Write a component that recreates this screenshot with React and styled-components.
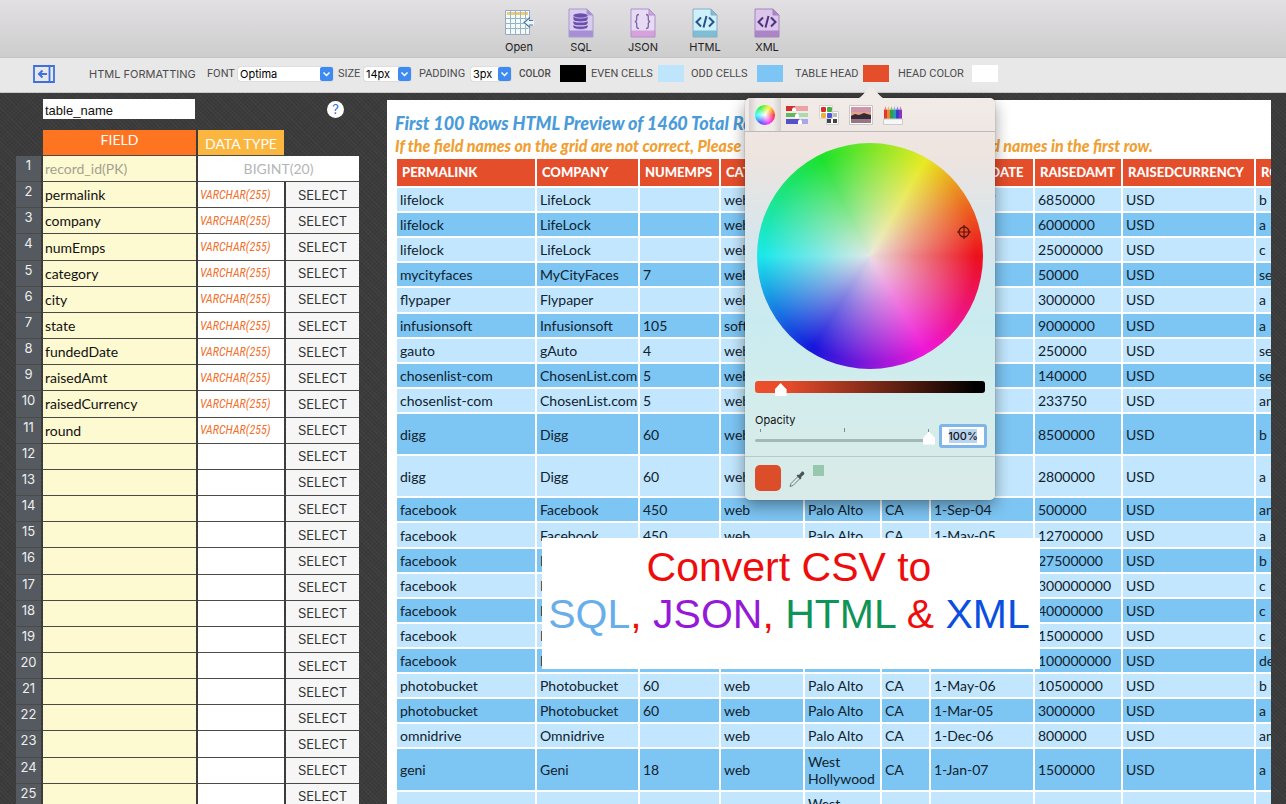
import React, { useState } from "react";
import styled, { createGlobalStyle } from "styled-components";

const GlobalStyle = createGlobalStyle`
  * {
    box-sizing: border-box;
  }

  body {
    margin: 0;
    overflow: hidden;
    font-family: Inter, "Liberation Sans", sans-serif;
    color: #111;
  }

  button, input, select {
    font: inherit;
    color: inherit;
    margin: 0;
    padding: 0;
    border: none;
    border-radius: 0;
    background: none;
  }
`;

const Page = styled.div`
  display: flex;
  flex-direction: column;
  height: 100vh;
  background-color: #3b3b3b;
  background-image:
    repeating-linear-gradient(45deg, rgba(255, 255, 255, 0.03) 0 1px, transparent 1px 3px),
    repeating-linear-gradient(-45deg, rgba(0, 0, 0, 0.05) 0 1px, transparent 1px 3px);
`;

/* ---------- top toolbar ---------- */

const Toolbar = styled.header`
  display: flex;
  justify-content: center;
  flex-shrink: 0;
  height: 58px;
  padding-top: 8px;
  background: linear-gradient(#e2e0e2, #cecdce);
  border-bottom: 1px solid #c4c4c4;
`;

const ToolButton = styled.button`
  display: flex;
  flex-direction: column;
  align-items: center;
  gap: 2px;
  width: 62px;
  font-size: 11px;
  line-height: 14px;
  color: #222;
`;

/* ---------- formatting bar ---------- */

const FormatBar = styled.div`
  display: grid;
  grid-template-columns: 56px 118px 131px 81px 100px 72px 100px 104px 103px 101px;
  align-items: center;
  flex-shrink: 0;
  height: 35px;
  padding: 0 0 3px 33px;
  background: #e8e8e8;
  border-bottom: 1px solid #c9c9c9;
  font-size: 11px;
  color: #4c4c4c;
  white-space: nowrap;
`;

const CollapseButton = styled.button`
  display: flex;
  width: 22px;
  height: 18px;
`;

const BarTitle = styled.span`
  font-size: 11px;
`;

const Field = styled.div`
  position: relative;
  display: flex;
  align-items: center;
`;

const FieldLabel = styled.label`
  width: ${(p) => p.$width}px;
  font-size: ${(p) => (p.$small ? 10 : 11)}px;
  font-weight: ${(p) => (p.$small ? 500 : 400)};
  font-family: Roboto, sans-serif;
`;

const SelectWrap = styled.div`
  display: grid;
  width: ${(p) => p.$width}px;
  height: 14px;
  background: white;
  border-radius: 2px;
  box-shadow: 0 0 1px rgba(0, 0, 0, 0.4);

  select, svg {
    grid-area: 1 / 1;
  }

  select {
    appearance: none;
    width: 100%;
    padding-left: 2px;
    font-size: 11px;
    line-height: 14px;
    color: black;
  }

  svg {
    justify-self: end;
    pointer-events: none;
  }
`;

const Swatch = styled.button`
  width: 26px;
  height: 17px;
  background: ${(p) => p.$color};
`;

/* ---------- field grid on the left ---------- */

const Body = styled.div`
  display: flex;
  flex: 1;
  min-height: 0;
  overflow: hidden;
`;

const SidePanel = styled.section`
  flex: 0 0 387px;
  padding: 6px 26px 0 14px;
`;

const NameRow = styled.div`
  display: flex;
  align-items: center;
  justify-content: space-between;
  height: 20px;
  margin-bottom: 11px;
  padding: 0 17px 0 29px;
`;

const NameInput = styled.input`
  width: 152px;
  height: 20px;
  padding: 2px 2px 0;
  background: white;
  font-family: "Liberation Sans", Arial, sans-serif;
  font-size: 13px;
`;

const HelpButton = styled.button`
  width: 17px;
  height: 17px;
  border-radius: 50%;
  background: white;
  color: #2f6fe0;
  font-size: 13px;
  line-height: 17px;
`;

const FieldTable = styled.table`
  width: 347px;
  height: 680px;
  table-layout: fixed;
  border-collapse: separate;
  border-spacing: 2px 0;
  font-family: Lato, sans-serif;
  font-size: 14px;

  th, td {
    padding: 0;
    border-bottom: 1px solid #4a4a46;
  }
`;

const HeadCell = styled.th`
  height: 26px;
  background: ${(p) => p.$color};
  background-clip: padding-box;
  color: white;
  font-weight: 400;
  line-height: 18px;

  && {
    padding-top: ${(p) => (p.$low ? 2 : 0)}px;
    padding-bottom: ${(p) => (p.$low ? 0 : 6)}px;
  }
`;

const BlankCell = styled.td`
  && {
    border: none;
  }
`;

const NumberCell = styled.th`
  background: #545a60;
  color: #eee;
  font-family: Inter, sans-serif;
  font-size: 13px;
  font-weight: 400;
  line-height: 18px;
  vertical-align: top;
`;

const NameCell = styled.td`
  background: #fdf9d0;

  input {
    display: block;
    width: 100%;
    padding: 1px 2px 0;
    line-height: 20px;
    color: ${(p) => (p.$muted ? "#a3a191" : "#111")};
  }
`;

const TypeCell = styled.td`
  background: white;
  font-family: "Roboto Condensed", "Open Sans Condensed", "Open Sans", sans-serif;
  font-size: 12px;
  font-weight: 400;
  font-style: italic;
  color: #f0702c;
  text-indent: 2px;
`;

const KeyTypeCell = styled.td`
  background: white;
  color: #b5b5b5;
  text-align: center;
`;

const SelectCell = styled.td`
  background: #f6f6f6;

  button {
    display: block;
    width: 100%;
    font-family: Inter, sans-serif;
    font-size: 13px;
    line-height: 20px;
    color: #333;
  }
`;

/* ---------- html preview ---------- */

const Preview = styled.main`
  position: relative;
  flex: 1;
  min-width: 0;
  margin: 7px 15px 0 0;
  padding: 13px 0 0 8px;
  background: white;
  overflow: hidden;
  white-space: nowrap;
`;

const PreviewTitle = styled.h1`
  margin: 0;
  font-family: Lato, sans-serif;
  font-size: 18px;
  font-weight: 900;
  font-style: italic;
  line-height: 20px;
  color: #4a9bd9;
`;

const PreviewHint = styled.p`
  margin: 2px 0 0;
  font-family: Lato, sans-serif;
  font-size: 16px;
  font-weight: 900;
  font-style: italic;
  line-height: 22px;
  color: #f0a033;
`;

const DataTable = styled.table`
  width: 949px;
  height: 677px;
  table-layout: fixed;
  border-spacing: 2px;
  font-family: Lato, sans-serif;
  font-size: 14px;
  line-height: 17px;

  th {
    height: 27px;
    padding: 3px 5px;
    background: #e54e2b;
    color: white;
    font-size: 13px;
    font-weight: 900;
    text-align: left;
  }

  td {
    padding: 3px;
    white-space: normal;
    color: #10222e;
  }

  tbody tr {
    background: #c1e6fd;
  }

  tbody tr:nth-child(even) {
    background: #7dc5f3;
  }
`;

const Banner = styled.div`
  position: absolute;
  top: 438px;
  left: 155px;
  width: 498px;
  height: 131px;
  padding: 6px 4px 0 0;
  background: white;
  font-family: "Liberation Sans", Arial, sans-serif;
  font-size: 41px;
  line-height: 47px;
  text-align: center;
  color: #ee0c0c;
`;

const Word = styled.span`
  color: ${(p) => p.$color};
`;

/* ---------- colour picker popover ---------- */

const Popover = styled.div`
  position: absolute;
  z-index: 5;
  top: 33px;
  left: -50px;
  width: 250px;
  border-radius: 5px;
  background: linear-gradient(#f1ebe8 0, #eee4e0 14%, #d6e6ec 35%, #c9ebf0 55%, #d3edec 75%, #d9eae8 100%);
  box-shadow: 0 0 1px rgba(0, 0, 0, 0.6), 0 6px 16px rgba(0, 0, 0, 0.4);
  color: #111;
`;

const Arrow = styled.svg`
  position: absolute;
  top: -13px;
  left: 111px;
`;

const Tabs = styled.div`
  display: flex;
  height: 34px;
  padding-left: 4px;
  border-bottom: 1px solid #bdb9b7;
`;

const Tab = styled.button`
  display: flex;
  align-items: center;
  justify-content: center;
  width: 32px;
  background: ${(p) => (p.$active ? "linear-gradient(90deg, #d3d0cf, #efecea 25%, #efecea 75%, #d3d0cf)" : "none")};
`;

const MiniWheel = styled.span`
  width: 20px;
  height: 20px;
  border-radius: 50%;
  background:
    radial-gradient(closest-side, white, transparent),
    conic-gradient(from 90deg, #f22, #f2f, #44f, #2ff, #2e2, #fe2, #f22);
`;

const Wheel = styled.div`
  position: relative;
  width: 226px;
  height: 226px;
  margin: 11px auto 10px;
  border-radius: 50%;
  background:
    radial-gradient(closest-side, rgba(236, 234, 232, 0.95), rgba(236, 234, 232, 0.5) 42%, transparent 94%),
    conic-gradient(from 90deg, #ec101c, #f018d8 60deg, #1616dc 122deg, #1ce8ea 180deg, #1ce22c 244deg, #e8ea24 300deg, #ec6a20 332deg, #ec101c 360deg);
`;

const Crosshair = styled.svg`
  position: absolute;
  top: 81px;
  left: 199px;
`;

const Range = styled.input`
  appearance: none;
  display: block;
  width: 100%;
  height: 16px;

  &::-webkit-slider-runnable-track {
    height: ${(p) => (p.$track ? 12 : 3)}px;
    border-radius: 3px;
    background: ${(p) => p.$track || "#a5b8b8"};
  }

  &::-webkit-slider-thumb {
    appearance: none;
    width: 12px;
    height: 13px;
    margin-top: ${(p) => (p.$track ? 2 : -7)}px;
    background: white;
    clip-path: polygon(50% 0, 100% 50%, 100% 100%, 0 100%, 0 50%);
  }
`;

const Sliders = styled.div`
  padding: 0 8px 8px 10px;
  border-bottom: 1px solid #b7c9c9;
`;

const BrightnessRow = styled.div`
  padding-right: 2px;
`;

const OpacityRow = styled.div`
  display: flex;
  justify-content: space-between;
  align-items: flex-end;
  height: 53px;
`;

const OpacityLabel = styled.label`
  display: block;
  width: 180px;
  font-size: 11px;
  line-height: 14px;
`;

const Ticks = styled.svg`
  display: block;
`;

const OpacityInput = styled.input`
  width: 48px;
  height: 24px;
  border: 3px solid #80b5e9;
  border-radius: 3px;
  background: linear-gradient(#b9d4f1, #b9d4f1) center / 28px 14px no-repeat white;
  font-size: 11px;
  font-weight: 500;
  text-align: center;
  outline: none;
`;

const PickerFooter = styled.div`
  display: flex;
  align-items: flex-start;
  gap: 7px;
  height: 43px;
  padding: 8px 10px;
`;

const CurrentColor = styled.button`
  width: 26px;
  height: 26px;
  border-radius: 5px;
  background: #dc4d29;
`;

const PickButton = styled.button`
  display: flex;
  align-self: center;
`;

const SavedColor = styled.button`
  width: 11px;
  height: 11px;
  background: #97c7ad;
`;

/* ---------- icons ---------- */

const OpenIcon = () => (
  <svg width="30" height="30" viewBox="0 0 30 30">
    <path d="M1.5 2.5h24v24h-24z" fill="#f4faf8" stroke="#9ba8c6" />
    <path d="M3 4h21v3H3z" fill="#e9cf73" />
    <path d="M2 10.5h23M2 15.5h23M2 20.5h23" stroke="#86b7cf" />
    <path d="M6.500 3v23M11.500 3v23M16.500 3v23M21.500 3v23" stroke="#9eb4c4" />
    <path d="M19 14.500l6-6v4h5v5h-5v4z" fill="#e9f6fc" />
    <path d="M26 9.500l-6 5 6 5M25 12.500h4M25 17h4" fill="none" stroke="#52769c" strokeWidth="1.200" />
  </svg>
);

const DocIcon = ({ fill, band, line, ink, kind }) => (
  <svg width="26" height="30" viewBox="0 0 26 30">
    <path d="M1 1h18l6 6v22H1z" fill={fill} />
    <path d="M1 22.500h24V29H1z" fill={band} />
    <path d="M1 1h18l6 6v22H1z" fill="none" stroke={line} />
    <path d="M19 1v6h6z" fill={band} stroke={line} />
    {kind === "db" && (
      <g fill={ink} stroke={fill} strokeWidth="0.800">
        <path d="M5 8v11c0 3.300 15 3.300 15 0V8z" />
        <ellipse cx="12.500" cy="7.500" rx="7.500" ry="2.600" />
        <path d="M5 11.500c0 3.300 15 3.300 15 0M5 15.500c0 3.300 15 3.300 15 0" fill="none" strokeWidth="1.200" />
      </g>
    )}
    {kind === "braces" && (
      <path
        d="M9 6.500c-2 0-2.300.8-2.300 2.300v2.400c0 1.500-.6 2.300-1.900 2.300 1.300 0 1.900.8 1.900 2.300v2.400c0 1.500.3 2.300 2.300 2.300M16 6.500c2 0 2.300.8 2.300 2.300v2.400c0 1.500.6 2.300 1.900 2.300-1.300 0-1.900.8-1.900 2.300v2.400c0 1.500-.3 2.300-2.300 2.300"
        fill="none"
        stroke={ink}
        strokeWidth="1.300"
      />
    )}
    {kind === "code" && (
      <path d="M9 9.500L4.500 14l4.500 4.500M17 9.500l4.500 4.500-4.500 4.500M14.500 8l-3 11.500" fill="none" stroke={ink} strokeWidth="2" />
    )}
  </svg>
);

const Chevron = () => (
  <svg width="13" height="14" viewBox="0 0 13 14">
    <rect width="13" height="14" rx="2" fill="#3d8bf0" />
    <path d="M3.500 5.500l3 3 3-3" fill="none" stroke="white" strokeWidth="1.500" />
  </svg>
);

const SlidersIcon = () => (
  <svg width="24" height="20" viewBox="0 0 24 20">
    <path d="M1 3.500h9" stroke="#cf3030" strokeWidth="5" />
    <path d="M10 3.500h13" stroke="#eda3a3" strokeWidth="5" />
    <path d="M1 10h11" stroke="#62b862" strokeWidth="4" />
    <path d="M12 10h11" stroke="#acdcac" strokeWidth="4" />
    <path d="M1 16.500h14" stroke="#5552c9" strokeWidth="5" />
    <path d="M15 16.500h8" stroke="#a9a7ea" strokeWidth="5" />
    <path d="M7 6V4l2-2 2 2v2zM10 13v-3l2-2 2 2v3zM13 19v-3l2-2 2 2v3z" fill="white" />
  </svg>
);

const PaletteIcon = () => (
  <svg width="22" height="22" viewBox="0 0 22 22">
    <path d="M8.500 7.500h12v13h-12z" fill="#fafafa" stroke="#d0d0d0" />
    <path d="M9 15h4v4H9zM15 15h4v4h-4z" fill="#444" />
    <path d="M15 9h4v4h-4z" fill="#bbb" />
    <path d="M1.500 1.500h13v13h-13z" fill="#fff" stroke="#d5d5d5" />
    <rect x="3" y="3" width="5" height="5" rx="1" fill="#dc2b2b" />
    <rect x="9" y="3" width="5" height="5" rx="1" fill="#4cae3b" />
    <rect x="3" y="9" width="5" height="5" rx="1" fill="#eeb13a" />
    <rect x="9" y="9" width="5" height="5" rx="1" fill="#4d55d8" />
  </svg>
);

const PhotoIcon = () => (
  <svg width="24" height="20" viewBox="0 0 24 20">
    <path d="M.5.500h23v19H.5z" fill="white" stroke="#c8c8c8" />
    <path d="M2 2h20v8H2z" fill="#cf96a9" />
    <path d="M2 7h20v4H2z" fill="#e6a189" />
    <path d="M2 11l4-2 4 1 5-2 3 1 4 1v4H2z" fill="#352a35" />
    <path d="M2 14h20v4H2z" fill="#9a7385" />
  </svg>
);

const PencilsIcon = () => (
  <svg width="20" height="20" viewBox="0 0 20 20">
    {["#dc3a2f", "#e38b2d", "#369c46", "#2b9aae", "#3040c8", "#9030c0"].map((c, i) => (
      <g key={c} fill={c}>
        <rect x={i * 3 + 1} y="5" width="3" height="9" />
        <path d={`M${i * 3 + 1} 5l1-2 .5-2 .5 2 1 2z`} opacity="0.600" />
      </g>
    ))}
    <path d="M.5 14h19v5.500H.5z" fill="#f7f7f7" stroke="#ccc" />
  </svg>
);

const Eyedropper = () => (
  <svg width="18" height="18" viewBox="0 0 18 18">
    <path d="M2 16.500l1-3 7-7 2 2-7 7z" fill="#dfe9e9" stroke="#6d7c7e" />
    <path d="M8.500 5.500l1.500-1 1 .5 2.500-3c1-1.300 3.800.8 2.500 2.500l-3 2.500.5 1-1.300 1.500z" fill="#46565a" />
  </svg>
);

/* ---------- data ---------- */

const fields = ["permalink", "company", "numEmps", "category", "city", "state", "fundedDate", "raisedAmt", "raisedCurrency", "round"];
const numbers = Array.from({ length: 24 }, (_, i) => i + 2);

const columnWidths = [138, 101, 79, 82, 75, 47, 102, 86, 131, 86];
const columns = ["PERMALINK", "COMPANY", "NUMEMPS", "CATEGORY", "CITY", "STATE", "FUNDEDDATE", "RAISEDAMT", "RAISEDCURRENCY", "ROUND"];

const rows = [
  ["lifelock", "LifeLock", "", "web", "Tempe", "AZ", "1-May-07", "6850000", "USD", "b"],
  ["lifelock", "LifeLock", "", "web", "Tempe", "AZ", "1-Oct-06", "6000000", "USD", "a"],
  ["lifelock", "LifeLock", "", "web", "Tempe", "AZ", "1-Jan-08", "25000000", "USD", "c"],
  ["mycityfaces", "MyCityFaces", "7", "web", "Scottsdale", "AZ", "1-Jan-08", "50000", "USD", "seed"],
  ["flypaper", "Flypaper", "", "web", "Phoenix", "AZ", "1-Feb-08", "3000000", "USD", "a"],
  ["infusionsoft", "Infusionsoft", "105", "software", "Gilbert", "AZ", "1-Oct-07", "9000000", "USD", "a"],
  ["gauto", "gAuto", "4", "web", "Scottsdale", "AZ", "1-Jan-08", "250000", "USD", "seed"],
  ["chosenlist-com", "ChosenList.com", "5", "web", "Scottsdale", "AZ", "1-Oct-06", "140000", "USD", "seed"],
  ["chosenlist-com", "ChosenList.com", "5", "web", "Scottsdale", "AZ", "1-Jan-08", "233750", "USD", "angel"],
  ["digg", "Digg", "60", "web", "San Francisco", "CA", "1-Dec-06", "8500000", "USD", "b"],
  ["digg", "Digg", "60", "web", "San Francisco", "CA", "1-Oct-05", "2800000", "USD", "a"],
  ["facebook", "Facebook", "450", "web", "Palo Alto", "CA", "1-Sep-04", "500000", "USD", "angel"],
  ["facebook", "Facebook", "450", "web", "Palo Alto", "CA", "1-May-05", "12700000", "USD", "a"],
  ["facebook", "Facebook", "450", "web", "Palo Alto", "CA", "1-Apr-06", "27500000", "USD", "b"],
  ["facebook", "Facebook", "450", "web", "Palo Alto", "CA", "1-Oct-07", "300000000", "USD", "c"],
  ["facebook", "Facebook", "450", "web", "Palo Alto", "CA", "1-Mar-08", "40000000", "USD", "c"],
  ["facebook", "Facebook", "450", "web", "Palo Alto", "CA", "1-Jan-08", "15000000", "USD", "c"],
  ["facebook", "Facebook", "450", "web", "Palo Alto", "CA", "1-May-08", "100000000", "USD", "debt_round"],
  ["photobucket", "Photobucket", "60", "web", "Palo Alto", "CA", "1-May-06", "10500000", "USD", "b"],
  ["photobucket", "Photobucket", "60", "web", "Palo Alto", "CA", "1-Mar-05", "3000000", "USD", "a"],
  ["omnidrive", "Omnidrive", "", "web", "Palo Alto", "CA", "1-Dec-06", "800000", "USD", "angel"],
  ["geni", "Geni", "18", "web", "West Hollywood", "CA", "1-Jan-07", "1500000", "USD", "a"],
  ["geni", "Geni", "18", "web", "West Hollywood", "CA", "1-Mar-07", "10000000", "USD", "b"],
];

const Combo = ({ id, label, labelWidth, width, options }) => (
  <Field>
    <FieldLabel htmlFor={id} $width={labelWidth}>{label}</FieldLabel>
    <SelectWrap $width={width}>
      <select id={id}>
        {options.map((o) => (
          <option key={o}>{o}</option>
        ))}
      </select>
      <Chevron />
    </SelectWrap>
  </Field>
);

const ColorField = ({ id, label, labelWidth, color, small, children }) => (
  <Field>
    <FieldLabel htmlFor={id} $width={labelWidth} $small={small}>{label}</FieldLabel>
    <Swatch id={id} type="button" $color={color} />
    {children}
  </Field>
);

const ColorPicker = () => {
  const [brightness, setBrightness] = useState(9);
  const [opacity, setOpacity] = useState(100);

  return (
    <Popover>
      <Arrow width="30" height="14" viewBox="0 0 30 14">
        <path d="M0 14c6 0 12-12.500 15-12.500S24 14 30 14z" fill="#f1ebe8" />
      </Arrow>
      <Tabs>
        <Tab type="button" aria-label="Wheel" $active><MiniWheel /></Tab>
        <Tab type="button" aria-label="Sliders"><SlidersIcon /></Tab>
        <Tab type="button" aria-label="Palettes"><PaletteIcon /></Tab>
        <Tab type="button" aria-label="Image"><PhotoIcon /></Tab>
        <Tab type="button" aria-label="Pencils"><PencilsIcon /></Tab>
      </Tabs>
      <Wheel>
        <Crosshair width="16" height="16" viewBox="0 0 16 16">
          <circle cx="8" cy="8" r="5" fill="none" stroke="#5d1308" strokeWidth="1.300" />
          <path d="M8 1v14M1 8h14" stroke="#5d1308" strokeWidth="1.200" />
        </Crosshair>
      </Wheel>
      <Sliders>
        <BrightnessRow>
          <Range
            type="range"
            aria-label="Brightness"
            value={brightness}
            onChange={(e) => setBrightness(Number(e.target.value))}
            $track="linear-gradient(90deg, #ee4f2d, #e44b2b 15%, #000 96%)"
          />
        </BrightnessRow>
        <OpacityRow>
          <OpacityLabel>
            Opacity
            <Ticks width="180" height="5" viewBox="0 0 180 5">
              <path d="M5.500 2v3M89.500 1v4M173.500 2v3" stroke="#7a8c8c" />
            </Ticks>
            <Range type="range" value={opacity} onChange={(e) => setOpacity(Number(e.target.value))} />
          </OpacityLabel>
          <OpacityInput aria-label="Opacity value" value={opacity + "%"} readOnly />
        </OpacityRow>
      </Sliders>
      <PickerFooter>
        <CurrentColor type="button" aria-label="Current color" />
        <PickButton type="button" aria-label="Pick color from screen"><Eyedropper /></PickButton>
        <SavedColor type="button" aria-label="Saved color" />
      </PickerFooter>
    </Popover>
  );
};

const App = () => {
  const [tableName, setTableName] = useState("table_name");
  const [names, setNames] = useState(fields);

  const renameField = (index, value) => {
    const next = [...names];
    next[index] = value;
    setNames(next);
  };

  return (
    <Page>
      <GlobalStyle />
      <Toolbar>
        <ToolButton type="button"><OpenIcon />Open</ToolButton>
        <ToolButton type="button"><DocIcon kind="db" fill="#d9cdef" band="#a78fd5" line="#a89bce" ink="#6b4fae" />SQL</ToolButton>
        <ToolButton type="button"><DocIcon kind="braces" fill="#e6daf5" band="#d7a2dc" line="#ad91cb" ink="#7d68a0" />JSON</ToolButton>
        <ToolButton type="button"><DocIcon kind="code" fill="#cdf1fa" band="#7fbdd4" line="#86aec4" ink="#28528c" />HTML</ToolButton>
        <ToolButton type="button"><DocIcon kind="code" fill="#dcc5eb" band="#ab85c6" line="#a184be" ink="#4a327c" />XML</ToolButton>
      </Toolbar>

      <FormatBar>
        <CollapseButton type="button" aria-label="Hide field list">
          <svg width="22" height="18" viewBox="0 0 22 18">
            <path d="M1 1h20v16H1zM16.500 1v16" fill="none" stroke="#3f70dd" strokeWidth="1.800" />
            <path d="M14 9H6M9.500 5.500L6 9l3.500 3.500" fill="none" stroke="#3f70dd" strokeWidth="2" />
          </svg>
        </CollapseButton>
        <BarTitle>HTML FORMATTING</BarTitle>
        <Combo id="font" label="FONT" labelWidth={31} width={95} options={["Optima", "Avenir"]} />
        <Combo id="size" label="SIZE" labelWidth={26} width={47} options={["14px", "16px"]} />
        <Combo id="padding" label="PADDING" labelWidth={52} width={40} options={["3px", "5px"]} />
        <ColorField id="color" label="COLOR" labelWidth={41} color="#000" small />
        <ColorField id="even" label="EVEN CELLS" labelWidth={67} color="#bfe5fd" />
        <ColorField id="odd" label="ODD CELLS" labelWidth={66} color="#7dc5f5" />
        <ColorField id="head" label="TABLE HEAD" labelWidth={68} color="#e54e2b">
          <ColorPicker />
        </ColorField>
        <ColorField id="headColor" label="HEAD COLOR" labelWidth={74} color="#fff" />
      </FormatBar>

      <Body>
        <SidePanel>
          <NameRow>
            <NameInput aria-label="Table name" value={tableName} onChange={(e) => setTableName(e.target.value)} />
            <HelpButton type="button">?</HelpButton>
          </NameRow>
          <FieldTable>
            <colgroup>
              <col width="25" />
              <col width="153" />
              <col width="86" />
              <col width="73" />
            </colgroup>
            <thead>
              <tr>
                <BlankCell />
                <HeadCell $color="#fe7421">FIELD</HeadCell>
                <HeadCell $color="#fbb640" $low>DATA TYPE</HeadCell>
                <BlankCell />
              </tr>
            </thead>
            <tbody>
              <tr>
                <NumberCell>1</NumberCell>
                <NameCell $muted><input aria-label="Field 1" value="record_id(PK)" readOnly /></NameCell>
                <KeyTypeCell colSpan={2}>BIGINT(20)</KeyTypeCell>
              </tr>
              {numbers.map((n, i) => (
                <tr key={n}>
                  <NumberCell>{n}</NumberCell>
                  <NameCell>
                    <input aria-label={`Field ${n}`} value={names[i] || ""} onChange={(e) => renameField(i, e.target.value)} />
                  </NameCell>
                  <TypeCell>{names[i] ? "VARCHAR(255)" : ""}</TypeCell>
                  <SelectCell><button type="button">SELECT</button></SelectCell>
                </tr>
              ))}
            </tbody>
          </FieldTable>
        </SidePanel>

        <Preview>
          <PreviewTitle>First 100 Rows HTML Preview of 1460 Total Rows</PreviewTitle>
          <PreviewHint>
            If the field names on the grid are not correct, Please make sure that your data has the field names in the first row.
          </PreviewHint>
          <DataTable>
            <colgroup>
              {columnWidths.map((w, i) => (
                <col key={i} width={w} />
              ))}
            </colgroup>
            <thead>
              <tr>
                {columns.map((c) => (
                  <th key={c}>{c}</th>
                ))}
              </tr>
            </thead>
            <tbody>
              {rows.map((row, r) => (
                <tr key={r}>
                  {row.map((cell, c) => (
                    <td key={c}>{cell}</td>
                  ))}
                </tr>
              ))}
            </tbody>
          </DataTable>
          <Banner>
            Convert CSV to
            <br />
            <Word $color="#67aeea">SQL</Word>, <Word $color="#951ad8">JSON</Word>, <Word $color="#0f9458">HTML</Word> &amp;{" "}
            <Word $color="#0b4fe0">XML</Word>
          </Banner>
        </Preview>
      </Body>
    </Page>
  );
};

export default App;
